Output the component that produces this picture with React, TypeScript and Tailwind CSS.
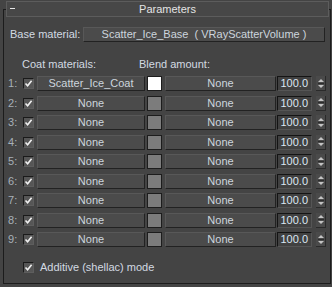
import React from "react";

const font = { fontFamily: '"Liberation Sans", Arial, sans-serif' };

// Checkbox quadrado com visto, como no painel do 3ds Max
const Check = () => (
  <div className="flex h-[11px] w-[11px] shrink-0 items-center justify-center border-t border-l border-t-[#1a1a1a] border-l-[#1a1a1a] border-b border-r border-b-[#5e5e5e] border-r-[#5e5e5e] bg-[#565656]">
    <svg width="9" height="9" viewBox="0 0 9 9">
      <path d="M1.5 4.5 L3.6 6.7 L7.6 1.8" fill="none" stroke="#f0f0f0" strokeWidth="1.6" />
    </svg>
  </div>
);

const Spinner = () => (
  <div className="ml-[4px] flex h-[15px] w-[10px] shrink-0 flex-col items-center justify-center bg-[#4a4a4a] border-b border-r border-b-[#2a2a2a] border-r-[#2a2a2a]">
    <svg width="8" height="13" viewBox="0 0 8 13">
      <path d="M4 2 L7 5 L1 5 Z" fill="#c4c4c4" />
      <rect x="1" y="6" width="6" height="1" fill="#2c2c2c" />
      <path d="M1 8 L7 8 L4 11 Z" fill="#c4c4c4" />
    </svg>
  </div>
);

const Btn: React.FC<{ w: string; children: React.ReactNode }> = ({ w, children }) => (
  <div
    className={`${w} flex h-[15px] shrink-0 items-center justify-center border-t border-l border-t-[#585858] border-l-[#585858] border-b border-r border-b-[#222] border-r-[#222] bg-[#4b4b4b] text-[11px] leading-none text-[#cdd5dd]`}
  >
    {children}
  </div>
);

const rows = [1, 2, 3, 4, 5, 6, 7, 8, 9];

export default function App() {
  return (
    <div className="h-[287px] w-[332px] overflow-hidden bg-[#444444] pt-[9px] pl-[3px]" style={font}>
      <div className="flex h-[275px] w-[328px] flex-col border border-[#1c1c1c]">
        {/* Cabeçalho */}
        <div className="relative -mt-[9px] ml-[2px] flex h-[16px] w-[323px] items-center border border-[#5c5c5c] bg-[#474747]">
          <span className="absolute left-[3px] top-[6px] h-[1px] w-[5px] bg-[#e6e6e6]" />
          <span className="w-full text-center text-[11px] leading-none text-[#e4e4e4]">Parameters</span>
        </div>

        {/* Base material */}
        <div className="mt-[10px] flex items-center">
          <span className="ml-[6px] w-[73px] text-[11px] leading-none text-[#d3dae2]">Base material:</span>
          <Btn w="w-[242px]">Scatter_Ice_Base&nbsp;&nbsp;( VRayScatterVolume )</Btn>
        </div>

        <div className="mt-[17px] flex text-[11px] leading-none text-[#d3dae2]">
          <span className="ml-[18px] w-[117px]">Coat materials:</span>
          <span>Blend amount:</span>
        </div>

        <div className="mt-[6px] flex flex-col gap-[4.5px] pl-[4px]">
          {rows.map((n) => (
            <div key={n} className="flex h-[15px] items-center">
              <span className="w-[15px] text-[11px] leading-none text-[#a8b0b8]">{n}:</span>
              <Check />
              <div className="ml-[3px]">
                <Btn w="w-[108px]">{n === 1 ? "Scatter_Ice_Coat" : "None"}</Btn>
              </div>
              <div
                className={`ml-[2px] h-[15px] w-[15px] shrink-0 border border-[#1d1d1d] ${
                  n === 1 ? "bg-white" : "bg-[#7c7c7c]"
                }`}
              />
              <div className="ml-[3px]">
                <Btn w="w-[111px]">None</Btn>
              </div>
              <div className="ml-[1px] flex h-[15px] w-[35px] shrink-0 items-center justify-end border-t border-l border-t-[#141414] border-l-[#141414] border-b border-r border-b-[#555] border-r-[#555] bg-[#414141] pr-[3px] text-[11px] leading-none text-[#dbe6f2]">
                100.0
              </div>
              <Spinner />
            </div>
          ))}
        </div>

        <div className="mt-[15px] flex items-center pl-[19px]">
          <Check />
          <span className="ml-[6px] text-[11px] leading-none text-[#d3dae2]">Additive (shellac) mode</span>
        </div>
      </div>
    </div>
  );
}
